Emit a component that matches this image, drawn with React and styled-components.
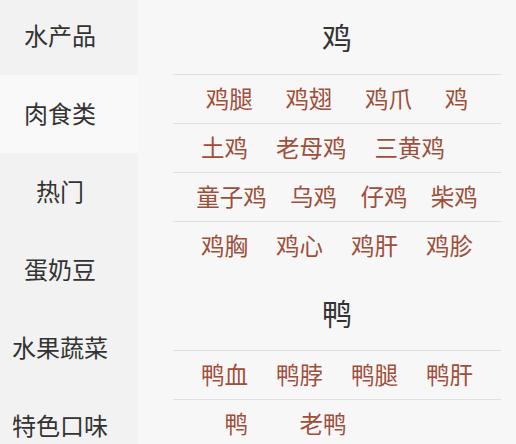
import React from 'react';
import styled, { createGlobalStyle } from 'styled-components';

const GlobalStyle = createGlobalStyle`
  html, body {
    margin: 0;
    padding: 0;
    height: 100%;
    overflow: hidden;
    background: #f7f7f7;
    font-family: "Noto Sans CJK SC", "Noto Sans", sans-serif;
  }
  #root { height: 100%; }
`;

// ==================== Styled Components ====================
const Page = styled.div`
  display: flex;
  width: 516px;
  height: 444px;
  overflow: hidden;
`;

const Sidebar = styled.div`
  width: 138px;
  flex-shrink: 0;
  background: #f2f2f2;
  display: flex;
  flex-direction: column;
  margin-top: -3px;
`;

const NavItem = styled.div`
  height: 78px;
  flex-shrink: 0;
  box-sizing: border-box;
  padding: 0 18px 4px 0;
  display: flex;
  align-items: center;
  justify-content: center;
  font-size: 24px;
  color: #333333;
  background: ${(p) => (p.$active ? '#f9f9f9' : 'transparent')};
`;

const Content = styled.div`
  flex: 1;
  padding: 0 15px 0 35px;
  margin-top: -6px;
  background: #f7f7f7;
`;

const SectionTitle = styled.div`
  height: 80px;
  box-sizing: border-box;
  padding-top: 3px;
  display: flex;
  align-items: center;
  justify-content: center;
  font-size: 30px;
  color: #333333;
`;

const Row = styled.div`
  height: 49px;
  box-sizing: border-box;
  border-top: 1.5px solid #e0e0e0;
  padding-bottom: 3px;
  display: flex;
  align-items: center;
  justify-content: space-evenly;
`;

const Tag = styled.span`
  font-size: 23.5px;
  color: #9e4f3a;
  white-space: nowrap;
`;

// ==================== Data ====================
const categories = ['水产品', '肉食类', '热门', '蛋奶豆', '水果蔬菜', '特色口味'];

const sections = [
  {
    title: '鸡',
    rows: [
      ['鸡腿', '鸡翅', '鸡爪', '鸡'],
      ['土鸡', '老母鸡', '三黄鸡'],
      ['童子鸡', '乌鸡', '仔鸡', '柴鸡'],
      ['鸡胸', '鸡心', '鸡肝', '鸡胗'],
    ],
  },
  {
    title: '鸭',
    rows: [
      ['鸭血', '鸭脖', '鸭腿', '鸭肝'],
      ['鸭', '老鸭'],
    ],
  },
];

// ==================== Main Component ====================
const App = () => {
  return (
    <Page>
      <GlobalStyle />
      <Sidebar>
        {categories.map((c) => (
          <NavItem key={c} $active={c === '肉食类'}>{c}</NavItem>
        ))}
      </Sidebar>
      <Content>
        {sections.map((s) => (
          <div key={s.title}>
            <SectionTitle>{s.title}</SectionTitle>
            {s.rows.map((row, i) => {
              // 한 줄에 4칸: 모자란 칸은 빈 칸으로 채움
              const cells = [...row, ...Array(4 - row.length).fill('')];
              return (
                <Row key={i}>
                  {cells.map((t, j) => (
                    <Tag key={j}>{t}</Tag>
                  ))}
                </Row>
              );
            })}
          </div>
        ))}
      </Content>
    </Page>
  );
};

export default App;
